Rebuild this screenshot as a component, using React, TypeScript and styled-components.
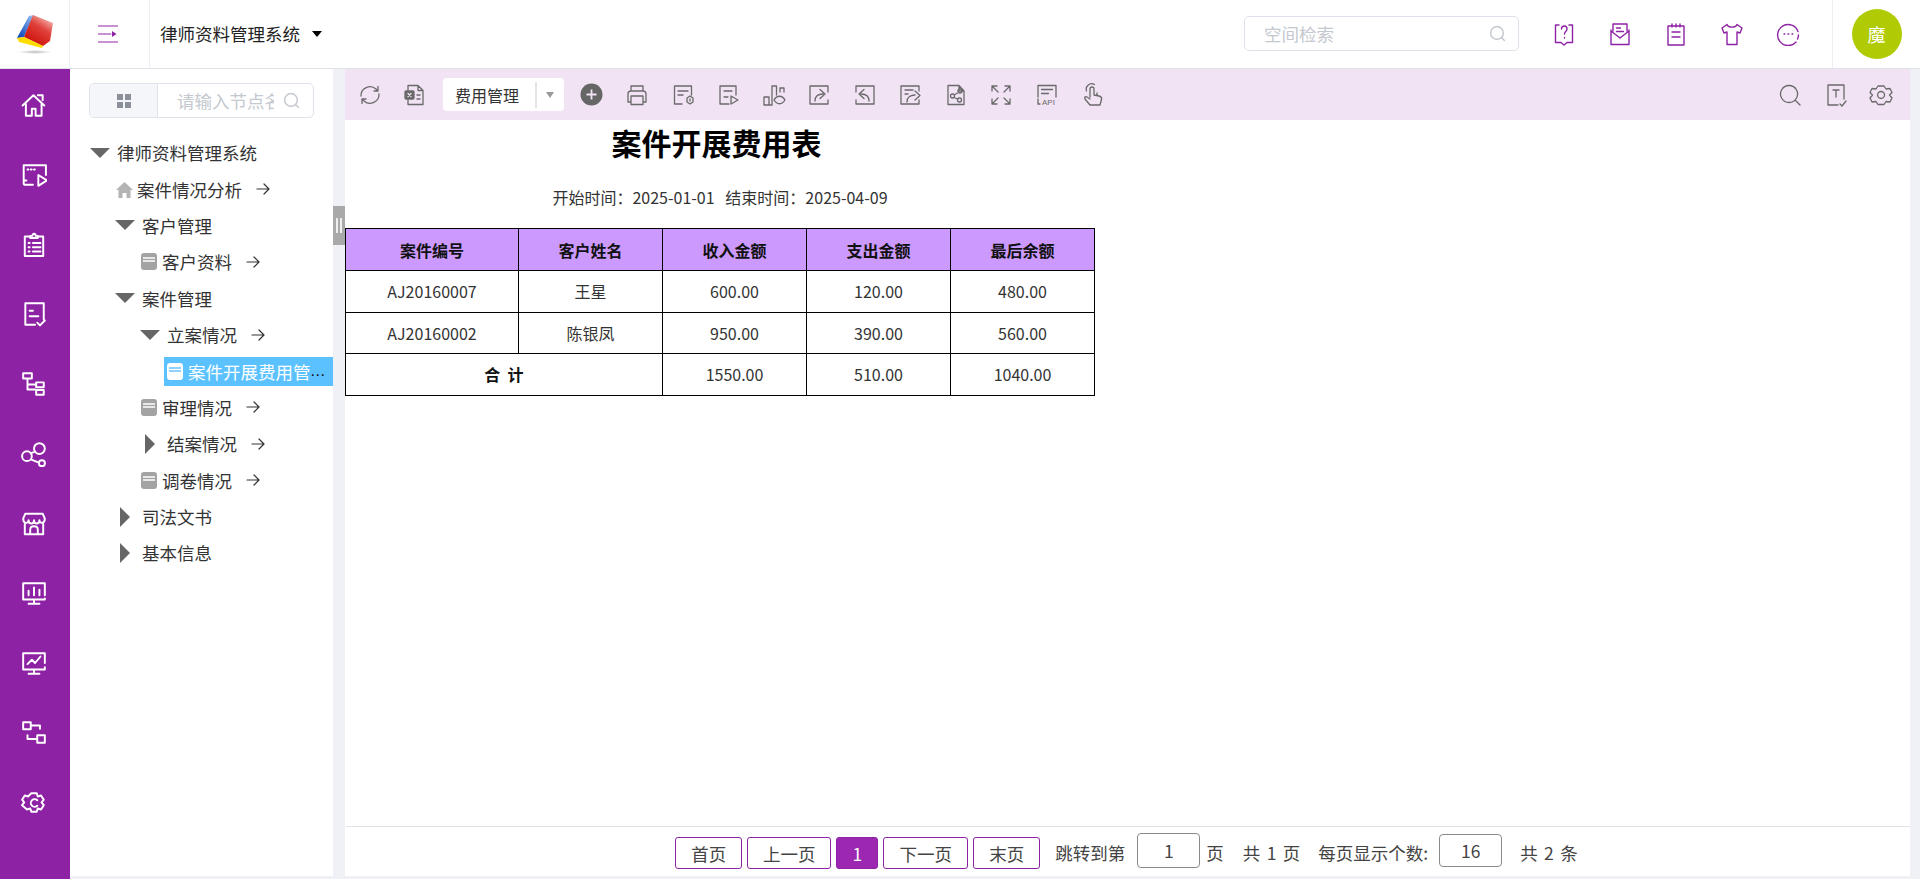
import React from "react";
import styled, { createGlobalStyle } from "styled-components";

const FONT = `"Noto Sans CJK SC", "Noto Sans", sans-serif`;
const PURPLE = "#8e22a5";

const GlobalStyle = createGlobalStyle`
  html, body { margin: 0; padding: 0; height: 100%; }
  body { font-family: ${FONT}; color: #333; background: #fff; overflow: hidden; }
  * { box-sizing: border-box; }
`;

const Page = styled.div`
  width: 1920px;
  height: 879px;
  display: flex;
  flex-direction: column;
`;

/* ---------- header ---------- */
const Header = styled.header`
  height: 69px;
  flex: none;
  display: flex;
  align-items: stretch;
  border-bottom: 1px solid #e0e2ea;
`;
const LogoCell = styled.div`
  width: 70px;
  display: flex;
  align-items: center;
  justify-content: center;
  border-right: 1px solid #eceef3;
`;
const MenuCell = styled.div`
  width: 80px;
  display: flex;
  align-items: center;
  justify-content: center;
  padding-right: 3px;
  border-right: 1px solid #eceef3;
  color: ${PURPLE};
`;
const SystemName = styled.div`
  display: flex;
  align-items: center;
  padding: 0 0 2px 10px;
  font-size: 17.5px;
  color: #222;
  width: 200px;
  white-space: nowrap;
`;
const DownCaret = styled.i<{ $color?: string; $w?: number; $h?: number }>`
  display: inline-block;
  width: 0;
  height: 0;
  border-left: ${(p) => (p.$w ?? 10) / 2}px solid transparent;
  border-right: ${(p) => (p.$w ?? 10) / 2}px solid transparent;
  border-top: ${(p) => p.$h ?? 6}px solid ${(p) => p.$color ?? "#000"};
`;
const NameCaret = styled(DownCaret)`
  margin-left: 12px;
  margin-top: 1px;
`;
const HeaderRight = styled.div`
  margin-left: auto;
  display: flex;
  align-items: center;
`;
const SearchBox = styled.div`
  width: 275px;
  height: 35px;
  margin: 0 17px 2px 0;
  display: flex;
  align-items: center;
  justify-content: space-between;
  padding: 0 12px 0 19px;
  border: 1px solid #dfe2ea;
  border-radius: 5px;
  font-size: 17.5px;
  color: #c4c8cf;
`;
const HeaderIcons = styled.div`
  display: flex;
  align-items: center;
  padding-right: 1px;
`;
const HeaderIconCell = styled.div`
  width: 56px;
  display: flex;
  justify-content: center;
  color: ${PURPLE};
`;
const AvatarCell = styled.div`
  width: 88px;
  height: 68px;
  margin-left: 15px;
  display: flex;
  align-items: center;
  justify-content: center;
  border-left: 1px solid #eceef3;
`;
const Avatar = styled.div`
  width: 50px;
  height: 50px;
  border-radius: 50%;
  background: #b0cb04;
  color: #fff;
  font-size: 18px;
  display: flex;
  align-items: center;
  justify-content: center;
`;

/* ---------- body ---------- */
const Body = styled.div`
  flex: 1;
  min-height: 0;
  display: flex;
  background: #f0f1f6;
`;
const Sidebar = styled.nav`
  width: 70px;
  flex: none;
  padding-top: 1px;
  background: ${PURPLE};
  color: #fff;
`;
const NavItem = styled.div`
  height: 69.8px;
  display: flex;
  align-items: center;
  justify-content: center;
  padding-right: 3px;
`;

const TreePanel = styled.aside`
  width: 263px;
  flex: none;
  background: #fff;
  margin-bottom: 3px;
  padding-top: 14px;
`;
const TreeSearch = styled.div`
  width: 225px;
  height: 35px;
  margin: 0 0 16.5px 19px;
  display: flex;
  border: 1px solid #dfe2ea;
  border-radius: 5px;
  overflow: hidden;
`;
const TreeMode = styled.div`
  width: 68px;
  flex: none;
  display: flex;
  align-items: center;
  justify-content: center;
  background: #f5f6fa;
  border-right: 1px solid #dfe2ea;
`;
const ModeGrid = styled.div`
  display: grid;
  grid-template-columns: 6px 6px;
  grid-auto-rows: 6px;
  gap: 2px;
  & > i { background: #8a8f99; display: block; }
`;
const TreeInput = styled.div`
  flex: 1;
  min-width: 0;
  display: flex;
  align-items: center;
  padding: 0 13px 0 19px;
  font-size: 17.5px;
  color: #c4c8cf;
  gap: 9px;
`;
const TreeHint = styled.span`
  flex: 1;
  overflow: hidden;
  white-space: nowrap;
`;
const TreeList = styled.div`
  display: flex;
  flex-direction: column;
`;
const Row = styled.div<{ $indent: number }>`
  height: 36.4px;
  padding-left: ${(p) => p.$indent}px;
  display: flex;
  align-items: center;
  font-size: 17.5px;
  color: #333;
  white-space: nowrap;
`;
const CaretSlot = styled.span`
  width: 27px;
  flex: none;
  display: flex;
  align-items: center;
`;
const RightCaret = styled.i`
  display: block;
  margin-left: 5px;
  width: 0;
  height: 0;
  border-top: 10px solid transparent;
  border-bottom: 10px solid transparent;
  border-left: 10px solid #666;
`;
const NodeIcon = styled.span`
  width: 21px;
  flex: none;
  display: flex;
`;
const HomeSlot = styled.span`
  width: 21px;
  flex: none;
  display: flex;
  color: #b4b4b4;
`;
const DocGlyph = styled.span<{ $light?: boolean }>`
  width: 16px;
  height: 17px;
  border-radius: 3px;
  background: ${(p) => (p.$light ? "#fff" : "#a3a3a3")};
  display: flex;
  flex-direction: column;
  gap: 1px;
  padding: 4px 2px 0;
  & > i { display: block; height: 2px; background: ${(p) => (p.$light ? "#8fd2ff" : "#e8e8e8")}; }
`;
const RowArrow = styled.span`
  margin-left: 14px;
  display: flex;
  color: #333;
`;
const SelectedRow = styled.div`
  margin-left: 94px;
  height: 29px;
  margin-top: 3.7px;
  margin-bottom: 3.7px;
  padding-left: 3px;
  display: flex;
  align-items: center;
  background: #5bc2ff;
  color: #fff;
  font-size: 17.5px;
  white-space: nowrap;
`;
const SelectedText = styled.span`
  margin-left: 5px;
`;
const SelectedDots = styled.span`
  font-family: "Liberation Sans", sans-serif;
  font-size: 16px;
  color: #111;
  letter-spacing: 0.5px;
`;

const Splitter = styled.div`
  width: 12px;
  flex: none;
  position: relative;
`;
const SplitHandle = styled.div`
  position: absolute;
  top: 137px;
  left: 0;
  width: 12px;
  height: 39px;
  background: #a9a9a9;
  display: flex;
  align-items: center;
  justify-content: center;
  gap: 2px;
  & > i { display: block; width: 2px; height: 15px; background: #eee; }
`;

const Main = styled.main`
  width: 1565px;
  flex: none;
  margin-bottom: 3px;
  background: #fff;
  display: flex;
  flex-direction: column;
`;
const Toolbar = styled.div`
  height: 51px;
  flex: none;
  display: flex;
  align-items: center;
  padding-left: 2px;
  background: #f1e3f4;
  color: #6a6a6a;
`;
const ToolCell = styled.div`
  width: 45.5px;
  flex: none;
  display: flex;
  justify-content: center;
`;
const ToolSelect = styled.div`
  width: 121px;
  height: 33px;
  margin: 0 5px 0 5px;
  flex: none;
  display: flex;
  align-items: center;
  background: #fff;
  border-radius: 4px;
  padding-left: 12px;
  font-size: 16px;
  color: #333;
`;
const SelectLabel = styled.span`
  width: 82px;
  height: 26px;
  line-height: 26px;
  border-right: 2px solid #e4e4e4;
  white-space: nowrap;
`;
const SelectCaret = styled(DownCaret)`
  margin-left: 9px;
`;
const ToolRight = styled.div`
  margin-left: auto;
  display: flex;
  padding-right: 6px;
`;

const Report = styled.div`
  flex: 1;
  width: 749px;
  min-height: 0;
`;
const ReportTitle = styled.h1`
  margin: 0;
  height: 45px;
  padding-right: 6px;
  line-height: 45px;
  text-align: center;
  font-size: 30px;
  font-weight: 700;
  color: #000;
`;
const ReportRange = styled.div`
  height: 63px;
  padding: 19px 0 0 1px;
  line-height: 26px;
  text-align: center;
  font-size: 16px;
  color: #333;
  white-space: pre;
`;
const Table = styled.table`
  width: 749px;
  table-layout: fixed;
  border-collapse: collapse;
  font-size: 16px;
  color: #333;
`;
const Th = styled.th`
  height: 42px;
  padding: 0;
  background: #cc99ff;
  border: 1px solid #000;
  font-size: 16px;
  font-weight: 700;
  color: #111;
`;
const Td = styled.td<{ $strong?: boolean }>`
  height: 41.5px;
  padding: 0;
  text-align: center;
  border: 1px solid #000;
  font-weight: ${(p) => (p.$strong ? 700 : 400)};
  color: ${(p) => (p.$strong ? "#111" : "#333")};
`;

const Footer = styled.footer`
  height: 50px;
  flex: none;
  margin-left: 1px;
  padding: 10px 3px 0 0;
  border-top: 1px solid #e2e2e6;
  display: flex;
  align-items: flex-start;
  justify-content: center;
  font-size: 17.5px;
  word-spacing: 2.5px;
  color: #444;
  white-space: nowrap;
`;
const PageBtn = styled.div<{ $w: number; $active?: boolean }>`
  width: ${(p) => p.$w}px;
  height: 32px;
  margin-right: 5px;
  display: flex;
  align-items: center;
  justify-content: center;
  border: 1px solid ${PURPLE};
  border-radius: 3px;
  background: ${(p) => (p.$active ? "#9c27b0" : "#fff")};
  color: ${(p) => (p.$active ? "#fff" : "#444")};
`;
const PageText = styled.span<{ $ml: number }>`
  height: 32px;
  line-height: 32px;
  margin-left: ${(p) => p.$ml}px;
`;
const PageInput = styled.div<{ $ml: number; $h: number; $up: number }>`
  width: 63px;
  height: ${(p) => p.$h}px;
  margin-left: ${(p) => p.$ml}px;
  margin-top: ${(p) => p.$up}px;
  display: flex;
  align-items: center;
  justify-content: center;
  border: 1px solid #8a8a8a;
  border-radius: 4px;
`;

/* ---------- icons ---------- */
const Svg = styled.svg<{ $s: number; $sw?: number }>`
  width: ${(p) => p.$s}px;
  height: ${(p) => p.$s}px;
  display: block;
  fill: none;
  stroke: currentColor;
  stroke-width: ${(p) => p.$sw ?? 1.3};
  stroke-linecap: round;
  stroke-linejoin: round;
`;
const ApiLabel = styled.text`
  font-family: "Liberation Sans", sans-serif;
  font-size: 8px;
  fill: currentColor;
  stroke: none;
`;

const Icon = ({ d, size = 24, sw }: { d: string; size?: number; sw?: number }) => (
  <Svg viewBox="0 0 24 24" $s={size} $sw={sw}>
    <path d={d} />
  </Svg>
);

const NAV = [
  "M1.500 12.500 11.500 3l10 9.500M4.500 10.500V22h5.500v-6.500h3.500V22H19V10.500M15.500 3h4.500v4.500",
  "M5 17H2.500V3H23v9M2.500 17v2.500c0 1 .5 1.500 1.500 1.500h7M6 7h.8M9 7h.8M12 7h.8M16 12v10l8-5z",
  "M8 5H3.500v18h17V5H16M8.500 6.500V4.500H10.500C10.500 2 13.500 2 13.500 4.500h2V6.500zM7 11h1M11 11h7M7 15h1M11 15h7M7 19h1M11 19h7",
  "M13 22H4V2h17v15M8 9h3M8 14h8M15 20l2.500 2.500L22 18",
  "M2 2h8v5H2zM6 7v10h7M14 10.500h7v4.500h-7zM14 17.500h7V22h-7zM6 12.500h8",
  "M1 14a4.500 4.500 0 1 0 9 0a4.500 4.500 0 1 0-9 0M12 7a5 5 0 1 0 10 0a5 5 0 1 0-10 0M16.500 20.500a2.800 2.800 0 1 0 5.600 0a2.800 2.800 0 1 0-5.600 0M9 11.500l4-2M9 17l7.500 3",
  "M3.500 12V21.500h17V12M2 7l2-4.500h16L22 7c0 5-5 5-5 1.500C17 12.500 12 12.500 12 8.500 12 12.500 7 12.500 7 8.500 7 12 2 12 2 7M8.500 21.500V17c0-4 7-4 7 0v4.500",
  "M22 14V3H2v15h20v-1M12 18v4M7 22h10M7 10v4M12 7v7M17 9v5",
  "M22 12V3H2v15h20v-2M12 18v4M7 22h10M6 13l4-4 3 3 5-6",
  "M2 2h7v6.500H2zM9 5h8.500v3M15 14h7v7h-7zM15 17.500H6V14",
  "M9.500 3h5l1 3 3-1 2.500 4-2 2.500 2 2.500-2.500 4-3-1-1 3h-5l-1-3-3 1L1 14l2-2.500L1 9l2.500-4 3 1zM15 9.500a3.500 3.500 0 1 0 0 5",
];

const TOP = [
  "M7 3H3.500v17.500H9l3 2.500 3-2.500h5.500V3H17M9.500 7c0-4 5.500-4 5.500 0 0 2.500-2.500 2.500-2.500 5M12.500 15.500v.5",
  "M5 9V2h14v7M8.500 6h4M8.500 9.500h7M3 8v14.500h18V8M3 9l9 7 9-7",
  "M4 4h16v19H4zM8 2v3M12 2v3M16 2v3M8 10h8M8 15h8",
  "M7 2.500 2 6l2 5 3-1v12.500h10V10l3 1 2-5-5-3.500c-1 3.500-9 3.500-10 0z",
  "M20 20A10.500 10.500 0 1 1 22 9.500M22.500 13a10 10 0 0 1-1 4M8 12h.8M12 12h.8M16 12h.8",
];

const TOOLS_C = [
  "M6 8V3h12v5M3 19V11c0-2 1-3 3-3h12c2 0 3 1 3 3v8h-3M6 19H3M6 13h12v8.500H6z",
  "M11 21H3.500V3h17v9M7 8h10M7 12h5M19 13l3 2v4l-3 2-3-2v-4zM19 16v2",
  "M13 21H4V3h16v9M8 8h8M8 14h4M15 13v8l7-4z",
  "M2 22V14h5v8zM10 22V3h4.500v9M18 9V5h4v4M2 22h8M12 17c3-5 8-5 11 0-3 5-8 5-11 0z",
  "M21 9V3H3v18h18v-4M8 18c0-5 3-7 8-7M13 6.500l5 4.500-5 4.500",
  "M3 9V3h18v18H3v-4M16 18c0-5-3-7-8-7M11 6.500 6 11l5 4.500",
  "M21 8V3H3v18h18v-4M7 7h8M7 11h3M9 19c0-5 4-7 8-7M17 8l5 4.500-5 4.500",
  "M4 2.500h11l5 5.500v13.500H4zM15 2.500V8h5M14 8a2 2 0 1 0 4 0a2 2 0 1 0-4 0M6.500 13a2 2 0 1 0 4 0a2 2 0 1 0-4 0M13.500 17a2 2 0 1 0 4 0a2 2 0 1 0-4 0M10 12l4.500-2.500M10 14.500l3.500 1.500",
  "M3 8V3h5M3 3l6 6M21 8V3h-5M21 3l-6 6M3 16v5h5M3 21l6-6M21 16v5h-5M21 21l-6-6",
];
const HAND =
  "M10 14V6a2 2 0 0 1 4 0v6l5 1c2 .5 3 1.500 2.500 3.500L20 22H10l-5-6c-1-2 1-3 2-2l3 2M14 12v-2M17 12.500V10M6.500 8C5 3 10-1 14.500 1.500";
const TOOLS_R = [
  "M11 2.500a8.500 8.500 0 1 0 .1 0M17 17l5 5",
  "M14 22H4V2h16v14M9 7h6M12 7v7M16 21l2 2 4-5",
  "M9 3h6l2 3 4-.5 2 4-2.500 2.500L23 15l-2 4-4-.5-2 3H9l-2-3-4 .5-2-4 2.500-3L1 9.500l2-4 4 .5zM12 8.500a3.500 3.500 0 1 0 .1 0",
];

const ArrowGlyph = () => (
  <Svg viewBox="0 0 14 14" $s={14} $sw={1.2}>
    <path d="M1 7h12M8 2l5 5-5 5" />
  </Svg>
);

const SearchGlyph = ({ size }: { size: number }) => (
  <Svg viewBox="0 0 16 16" $s={size} $sw={1.4}>
    <circle cx="7.500" cy="7.500" r="6" />
    <path d="m12 12 2.500 2.500" />
  </Svg>
);

const ExcelGlyph = () => (
  <Svg viewBox="0 0 24 24" $s={24}>
    <path d="M5 7V2.500h10l5 5v14H5V17M15 2.500v5h5M14 12h3M14 16h3" />
    <rect x="2" y="8" width="9" height="8" rx="1" fill="currentColor" />
    <path d="m5 10.500 3 3M8 10.500l-3 3" stroke="#f1e3f4" strokeWidth="1.200" />
  </Svg>
);

const ApiGlyph = () => (
  <Svg viewBox="0 0 24 24" $s={24}>
    <path d="M3 14V2.500h18V14M6.500 6.500h11M6.500 10.500h7M3 16v5h2" />
    <ApiLabel x="7" y="22">API</ApiLabel>
  </Svg>
);

const Logo = () => (
  <svg width="44" height="44" viewBox="0 0 44 44">
    <defs>
      <linearGradient id="lgRed" x1="0.800" y1="0" x2="0.200" y2="1">
        <stop offset="0" stopColor="#f6c6c0" />
        <stop offset="0.400" stopColor="#e0403a" />
        <stop offset="1" stopColor="#c80a00" />
      </linearGradient>
      <linearGradient id="lgBlue" x1="1" y1="0" x2="0" y2="1">
        <stop offset="0" stopColor="#9cc6f5" />
        <stop offset="1" stopColor="#0038b8" />
      </linearGradient>
      <radialGradient id="lgShade">
        <stop offset="0" stopColor="#bdbdbd" />
        <stop offset="1" stopColor="#ffffff" />
      </radialGradient>
    </defs>
    <path d="M16 4 21 3 11 25 4 26z" fill="url(#lgBlue)" />
    <path d="M20 3 40 11 37 29 30 34 11 25z" fill="url(#lgRed)" />
    <path d="M4 26 11 25 30 34 29 36 6 30z" fill="#ffdc00" />
    <ellipse cx="22" cy="40" rx="17" ry="2" fill="url(#lgShade)" />
  </svg>
);

const MenuGlyph = () => (
  <Svg viewBox="0 0 20 18" $s={20} $sw={1}>
    <path d="M0 1h20M0 9h13M0 17h20" />
    <path d="M14 6l4.500 3-4.500 3z" fill="currentColor" stroke="none" />
  </Svg>
);

const HomeGlyph = () => (
  <svg width="17" height="17" viewBox="0 0 17 17" fill="currentColor">
    <path d="M8.500 1 0 9h2.500v8h4v-5h4v5h4V9H17z" />
  </svg>
);

const Doc = ({ light }: { light?: boolean }) => (
  <DocGlyph $light={light}>
    <i />
    <i />
  </DocGlyph>
);

const Arrow = () => (
  <RowArrow>
    <ArrowGlyph />
  </RowArrow>
);

const COLUMNS = ["案件编号", "客户姓名", "收入金额", "支出金额", "最后余额"];
const ROWS = [
  ["AJ20160007", "王星", "600.00", "120.00", "480.00"],
  ["AJ20160002", "陈银凤", "950.00", "390.00", "560.00"],
];
const COL_WIDTHS = [173, 144, 144, 144, 144];

export default function App() {
  return (
    <Page>
      <GlobalStyle />
      <Header>
        <LogoCell>
          <Logo />
        </LogoCell>
        <MenuCell>
          <MenuGlyph />
        </MenuCell>
        <SystemName>
          律师资料管理系统
          <NameCaret />
        </SystemName>
        <HeaderRight>
          <SearchBox>
            空间检索
            <SearchGlyph size={17} />
          </SearchBox>
          <HeaderIcons>
            {TOP.map((d) => (
              <HeaderIconCell key={d}>
                <Icon d={d} size={24} sw={1.4} />
              </HeaderIconCell>
            ))}
          </HeaderIcons>
          <AvatarCell>
            <Avatar>魔</Avatar>
          </AvatarCell>
        </HeaderRight>
      </Header>
      <Body>
        <Sidebar>
          {NAV.map((d) => (
            <NavItem key={d}>
              <Icon d={d} size={26} sw={1.8} />
            </NavItem>
          ))}
        </Sidebar>
        <TreePanel>
          <TreeSearch>
            <TreeMode>
              <ModeGrid>
                <i />
                <i />
                <i />
                <i />
              </ModeGrid>
            </TreeMode>
            <TreeInput>
              <TreeHint>请输入节点名称</TreeHint>
              <SearchGlyph size={17} />
            </TreeInput>
          </TreeSearch>
          <TreeList>
            <Row $indent={20}>
              <CaretSlot>
                <DownCaret $color="#666" $w={20} $h={10} />
              </CaretSlot>
              律师资料管理系统
            </Row>
            <Row $indent={46}>
              <HomeSlot>
                <HomeGlyph />
              </HomeSlot>
              案件情况分析
              <Arrow />
            </Row>
            <Row $indent={45}>
              <CaretSlot>
                <DownCaret $color="#666" $w={20} $h={10} />
              </CaretSlot>
              客户管理
            </Row>
            <Row $indent={71}>
              <NodeIcon>
                <Doc />
              </NodeIcon>
              客户资料
              <Arrow />
            </Row>
            <Row $indent={45}>
              <CaretSlot>
                <DownCaret $color="#666" $w={20} $h={10} />
              </CaretSlot>
              案件管理
            </Row>
            <Row $indent={70}>
              <CaretSlot>
                <DownCaret $color="#666" $w={20} $h={10} />
              </CaretSlot>
              立案情况
              <Arrow />
            </Row>
            <SelectedRow>
              <Doc light />
              <SelectedText>案件开展费用管</SelectedText>
              <SelectedDots>...</SelectedDots>
            </SelectedRow>
            <Row $indent={71}>
              <NodeIcon>
                <Doc />
              </NodeIcon>
              审理情况
              <Arrow />
            </Row>
            <Row $indent={70}>
              <CaretSlot>
                <RightCaret />
              </CaretSlot>
              结案情况
              <Arrow />
            </Row>
            <Row $indent={71}>
              <NodeIcon>
                <Doc />
              </NodeIcon>
              调卷情况
              <Arrow />
            </Row>
            <Row $indent={45}>
              <CaretSlot>
                <RightCaret />
              </CaretSlot>
              司法文书
            </Row>
            <Row $indent={45}>
              <CaretSlot>
                <RightCaret />
              </CaretSlot>
              基本信息
            </Row>
          </TreeList>
        </TreePanel>
        <Splitter>
          <SplitHandle>
            <i />
            <i />
          </SplitHandle>
        </Splitter>
        <Main>
          <Toolbar>
            <ToolCell>
              <Icon d="M3 13a9 9 0 0 1 15-7l2 2V3.500M21 11a9 9 0 0 1-15 7l-2-2v4.500M20 8h-4M4 16h4" />
            </ToolCell>
            <ToolCell>
              <ExcelGlyph />
            </ToolCell>
            <ToolSelect>
              <SelectLabel>费用管理</SelectLabel>
              <SelectCaret $color="#999" $w={9} $h={6} />
            </ToolSelect>
            <ToolCell>
              <svg width="23" height="23" viewBox="0 0 23 23">
                <circle cx="11.500" cy="11.500" r="11" fill="#666" />
                <path d="M11.500 6.500v10M6.500 11.500h10" stroke="#f1e3f4" strokeWidth="1.800" />
              </svg>
            </ToolCell>
            {TOOLS_C.map((d) => (
              <ToolCell key={d}>
                <Icon d={d} />
              </ToolCell>
            ))}
            <ToolCell>
              <ApiGlyph />
            </ToolCell>
            <ToolCell>
              <Icon d={HAND} />
            </ToolCell>
            <ToolRight>
              {TOOLS_R.map((d) => (
                <ToolCell key={d}>
                  <Icon d={d} />
                </ToolCell>
              ))}
            </ToolRight>
          </Toolbar>
          <Report>
            <ReportTitle>案件开展费用表</ReportTitle>
            <ReportRange>开始时间：2025-01-01   结束时间：2025-04-09</ReportRange>
            <Table>
              <colgroup>
                {COL_WIDTHS.map((w, i) => (
                  <col key={i} width={w} />
                ))}
              </colgroup>
              <thead>
                <tr>
                  {COLUMNS.map((c) => (
                    <Th key={c}>{c}</Th>
                  ))}
                </tr>
              </thead>
              <tbody>
                {ROWS.map((r) => (
                  <tr key={r[0]}>
                    {r.map((v) => (
                      <Td key={v}>{v}</Td>
                    ))}
                  </tr>
                ))}
                <tr>
                  <Td colSpan={2} $strong>
                    合&nbsp;&nbsp;计
                  </Td>
                  <Td>1550.00</Td>
                  <Td>510.00</Td>
                  <Td>1040.00</Td>
                </tr>
              </tbody>
            </Table>
          </Report>
          <Footer>
            <PageBtn $w={67}>首页</PageBtn>
            <PageBtn $w={84}>上一页</PageBtn>
            <PageBtn $w={42} $active>
              1
            </PageBtn>
            <PageBtn $w={85}>下一页</PageBtn>
            <PageBtn $w={67}>末页</PageBtn>
            <PageText $ml={10}>跳转到第</PageText>
            <PageInput $ml={12} $h={35} $up={-4}>
              1
            </PageInput>
            <PageText $ml={6}>页</PageText>
            <PageText $ml={19}>共 1 页</PageText>
            <PageText $ml={18}>每页显示个数:</PageText>
            <PageInput $ml={11} $h={33} $up={-3}>
              16
            </PageInput>
            <PageText $ml={18}>共 2 条</PageText>
          </Footer>
        </Main>
      </Body>
    </Page>
  );
}
